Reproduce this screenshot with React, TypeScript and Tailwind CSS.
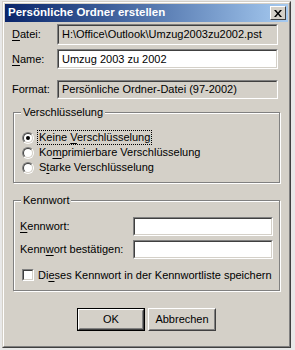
import React from "react";

const font = { fontFamily: '"Liberation Sans", Arial, sans-serif' };

const Key = ({ children }: { children: React.ReactNode }) => (
  <span className="underline underline-offset-[2px]">{children}</span>
);

const sunken =
  "border border-t-[#808080] border-l-[#808080] border-b-white border-r-white";
const sunkenInner =
  "border border-t-[#404040] border-l-[#404040] border-b-[#d4d0c8] border-r-[#d4d0c8]";

const Field = ({
  value,
  disabled,
  className,
}: {
  value?: string;
  disabled?: boolean;
  className?: string;
}) => (
  <div className={`${sunken} ${className ?? ""}`}>
    <div
      className={`${sunkenInner} h-full flex items-center px-[3px] ${
        disabled ? "bg-[#d4d0c8]" : "bg-white"
      }`}
    >
      <span className="text-[11px] text-black whitespace-nowrap">{value}</span>
    </div>
  </div>
);

const GroupBox = ({
  legend,
  className,
  children,
}: {
  legend: string;
  className?: string;
  children: React.ReactNode;
}) => (
  <div
    className={`relative border border-[#808080] shadow-[1px_1px_0_white,inset_1px_1px_0_white] ${
      className ?? ""
    }`}
  >
    <span className="absolute -top-[8px] left-[7px] bg-[#d4d0c8] px-[2px] text-[11px] leading-[14px] whitespace-nowrap">
      {legend}
    </span>
    {children}
  </div>
);

const Radio = ({
  checked,
  children,
  focus,
}: {
  checked?: boolean;
  children: React.ReactNode;
  focus?: boolean;
}) => (
  <div className="flex items-center h-[15px]">
    <div className="w-[12px] h-[12px] rounded-full border border-t-[#808080] border-l-[#808080] border-b-white border-r-white">
      <div className="w-full h-full rounded-full border border-t-[#404040] border-l-[#404040] border-b-[#d4d0c8] border-r-[#d4d0c8] bg-white flex items-center justify-center">
        {checked && <div className="w-[4px] h-[4px] rounded-full bg-black" />}
      </div>
    </div>
    <span
      className={`ml-[4px] text-[11px] leading-[13px] px-[1px] whitespace-nowrap ${
        focus ? "outline outline-1 outline-dotted outline-black" : ""
      }`}
    >
      {children}
    </span>
  </div>
);

const Button = ({
  children,
  def,
}: {
  children: React.ReactNode;
  def?: boolean;
}) => (
  <div
    className={`w-[68px] h-[23px] ${def ? "border border-black" : ""} bg-[#d4d0c8]`}
  >
    <div className="w-full h-full border border-t-white border-l-white border-b-[#404040] border-r-[#404040]">
      <div className="w-full h-full border border-t-[#d4d0c8] border-l-[#d4d0c8] border-b-[#808080] border-r-[#808080] flex items-center justify-center text-[11px]">
        {children}
      </div>
    </div>
  </div>
);

export default function App() {
  return (
    <div className="w-[295px] h-[350px] bg-[#e8e8e8] pl-[2px] pt-[1px]" style={font}>
      <div className="w-[289px] h-[347px] border border-t-[#d4d0c8] border-l-[#d4d0c8] border-b-[#404040] border-r-[#404040]">
        <div className="w-full h-full border border-t-white border-l-white border-b-[#808080] border-r-[#808080] bg-[#d4d0c8] p-[1px] flex flex-col">
          {/* title bar */}
          <div className="h-[18px] bg-gradient-to-r from-[#0a246a] to-[#a6caf0] flex items-center justify-between pl-[3px] pr-[2px]">
            <span className="text-white font-bold text-[11.5px] whitespace-nowrap">
              Persönliche Ordner erstellen
            </span>
            <div className="w-[16px] h-[14px] bg-[#d4d0c8] border border-t-white border-l-white border-b-[#404040] border-r-[#404040] flex items-center justify-center">
              <svg width="8" height="7" viewBox="0 0 8 7">
                <path d="M0 0h2l2 2.5L6 0h2L5 3.5 8 7H6L4 4.5 2 7H0l3-3.5z" fill="black" />
              </svg>
            </div>
          </div>

          <div className="text-black text-[11px] flex flex-col">
            <div className="flex items-center mt-[2px] ml-[7px] h-[21px]">
              <span className="w-[45px]">
                <Key>D</Key>atei:
              </span>
              <Field disabled value="H:\Office\Outlook\Umzug2003zu2002.pst" className="w-[221px] h-[21px]" />
            </div>
            <div className="flex items-center mt-[4px] ml-[7px] h-[20px]">
              <span className="w-[45px]">
                <Key>N</Key>ame:
              </span>
              <Field value="Umzug 2003 zu 2002" className="w-[221px] h-[20px]" />
            </div>
            <div className="flex items-center mt-[11px] ml-[7px] h-[19px]">
              <span className="w-[45px]">Format:</span>
              <Field disabled value="Persönliche Ordner-Datei (97-2002)" className="w-[221px] h-[19px]" />
            </div>

            <GroupBox legend="Verschlüsselung" className="mt-[13px] ml-[8px] w-[267px] h-[71px]">
              <div className="flex flex-col pt-[17px] pl-[8px]">
                <Radio checked focus>
                  Keine <Key>V</Key>erschlüsselung
                </Radio>
                <Radio>
                  Ko<Key>m</Key>primierbare Verschlüsselung
                </Radio>
                <Radio>
                  S<Key>t</Key>arke Verschlüsselung
                </Radio>
              </div>
            </GroupBox>

            <GroupBox legend="Kennwort" className="mt-[17px] ml-[8px] w-[267px] h-[91px]">
              <div className="flex flex-col pt-[16px] pl-[6px]">
                <div className="flex items-center h-[19px]">
                  <span className="w-[113px]">
                    <Key>K</Key>ennwort:
                  </span>
                  <Field className="w-[140px] h-[19px]" />
                </div>
                <div className="flex items-center h-[19px] mt-[4px]">
                  <span className="w-[113px] whitespace-nowrap">
                    Kenn<Key>w</Key>ort bestätigen:
                  </span>
                  <Field className="w-[140px] h-[19px]" />
                </div>
                <div className="flex items-center mt-[8px] ml-[2px]">
                  <div className="w-[12px] h-[12px] shrink-0 border border-t-[#808080] border-l-[#808080] border-b-white border-r-white">
                    <div className="w-full h-full border border-t-[#404040] border-l-[#404040] border-b-[#d4d0c8] border-r-[#d4d0c8] bg-white" />
                  </div>
                  <span className="ml-[4px] whitespace-nowrap">
                    Di<Key>e</Key>ses Kennwort in der Kennwortliste speichern
                  </span>
                </div>
              </div>
            </GroupBox>

            <div className="flex mt-[17px] ml-[72px] gap-[3px]">
              <Button def>OK</Button>
              <Button>Abbrechen</Button>
            </div>
          </div>
        </div>
      </div>
    </div>
  );
}
